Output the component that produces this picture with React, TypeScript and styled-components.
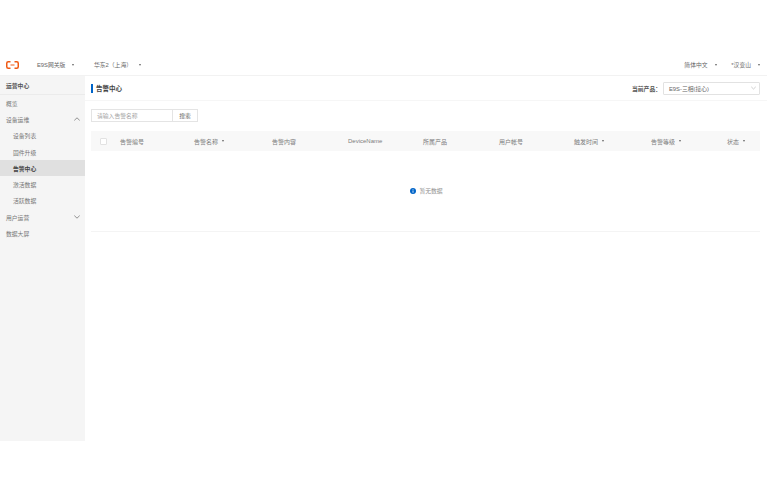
import React from "react";
import styled, { createGlobalStyle } from "styled-components";

const textColor = "#757575";
const fontStack = `"Liberation Sans", "Noto Sans CJK SC", sans-serif`;

const GlobalStyle = createGlobalStyle`
  body {
    margin: 0;
    background: #fff;
    font-family: ${fontStack};
    overflow: hidden;
  }
`;

const Page = styled.div`
  width: 767px;
  height: 495px;
  padding-top: 52px;
  box-sizing: border-box;
`;

// HEADER //
const Header = styled.header`
  display: flex;
  align-items: center;
  box-sizing: border-box;
  height: 24px;
  padding: 2px 7px 0 6px;
  border-bottom: 1px solid #f2f2f2;
  font-size: 5.8px;
  color: #666;
`;

const Logo = styled.svg`
  width: 13px;
  height: 8px;
  margin-right: 18px;
`;

const HeaderMenu = styled.div<{ $width?: number }>`
  display: flex;
  align-items: center;
  gap: 7px;
  width: ${(p) => (p.$width ? `${p.$width}px` : "auto")};
  white-space: nowrap;
`;

const Spacer = styled.div`
  flex: 1;
`;

const Caret = styled.span`
  display: inline-block;
  width: 0;
  height: 0;
  border-left: 1.5px solid transparent;
  border-right: 1.5px solid transparent;
  border-top: 2px solid #666;
`;

// BODY //
const Body = styled.div`
  display: flex;
  height: 365px;
`;

const Sidebar = styled.aside`
  width: 85px;
  background: #f5f5f5;
  flex-shrink: 0;
`;

const SideTitle = styled.div`
  display: flex;
  align-items: center;
  height: 18px;
  padding-left: 6px;
  border-bottom: 1px solid #ebebeb;
  font-size: 5.8px;
  font-weight: 700;
  color: #555;
`;

const SideItem = styled.div<{ $child?: boolean; $active?: boolean }>`
  display: flex;
  align-items: center;
  justify-content: space-between;
  height: 16.3px;
  padding: 0 5px 0 ${(p) => (p.$child ? 13 : 6)}px;
  font-size: 5.8px;
  font-weight: ${(p) => (p.$active ? 700 : 400)};
  color: ${(p) => (p.$active ? "#444" : textColor)};
  background: ${(p) => (p.$active ? "#e0e0e0" : "transparent")};
`;

const Chevron = styled.svg<{ $light?: boolean }>`
  width: ${(p) => (p.$light ? 5 : 6)}px;
  height: 4px;
  fill: none;
  stroke: ${(p) => (p.$light ? "#b5b5b5" : "#777")};
  stroke-width: 0.8;
`;

const Main = styled.main`
  flex: 1;
  min-width: 0;
`;

const TitleBar = styled.div`
  display: flex;
  align-items: center;
  justify-content: space-between;
  height: 24px;
  padding: 0 7px 0 6px;
  border-bottom: 1px solid #f6f6f6;
`;

const PageTitle = styled.h1`
  margin: 0;
  padding-left: 3px;
  border-left: 2px solid #0064c8;
  font-size: 6.5px;
  line-height: 9px;
  font-weight: 700;
  color: #444;
`;

const ProductPicker = styled.div`
  display: flex;
  align-items: center;
  font-size: 5.8px;
  font-weight: 700;
  color: #555;
`;

const Select = styled.div`
  display: flex;
  align-items: center;
  justify-content: space-between;
  box-sizing: border-box;
  width: 97px;
  height: 13px;
  margin-left: 2px;
  padding: 0 3px 0 5px;
  border: 1px solid #e2e2e2;
  border-radius: 1px;
  font-weight: 400;
  color: #666;
`;

const Content = styled.div`
  padding: 8px 7px 0 6px;
`;

const SearchRow = styled.div`
  display: flex;
  height: 13px;
  margin-bottom: 9px;
`;

const SearchInput = styled.div`
  display: flex;
  align-items: center;
  box-sizing: border-box;
  width: 82px;
  padding-left: 5px;
  border: 1px solid #e4e4e4;
  font-size: 5.8px;
  color: #a5a5a5;
`;

const SearchButton = styled.div`
  display: flex;
  align-items: center;
  justify-content: center;
  box-sizing: border-box;
  width: 25px;
  border: 1px solid #e4e4e4;
  border-left: none;
  font-size: 5.8px;
  color: #666;
`;

const TableHead = styled.div`
  display: grid;
  grid-template-columns: 29px 74px 78px 76px 75px 76px 75px 77px 76px 1fr;
  align-items: center;
  height: 20px;
  background: #f8f8f8;
  font-size: 6px;
  color: #7d7d7d;
`;

const CheckCell = styled.div`
  display: flex;
  padding-left: 9px;
`;

const Checkbox = styled.span`
  box-sizing: border-box;
  width: 7px;
  height: 7px;
  border: 1px solid #e2e2e2;
  border-radius: 1px;
  background: #fff;
`;

const HeadCell = styled.div`
  display: flex;
  align-items: center;
  gap: 4px;
  white-space: nowrap;
`;

const EmptyState = styled.div`
  display: flex;
  align-items: center;
  justify-content: center;
  gap: 3px;
  box-sizing: border-box;
  height: 81px;
  padding: 0 0 1px 2px;
  border-bottom: 1px solid #f4f4f4;
  font-size: 5.8px;
  color: #909090;
`;

const InfoIcon = styled.svg`
  width: 6px;
  height: 6px;
`;

const columns = [
  { label: "告警编号" },
  { label: "告警名称", sort: true },
  { label: "告警内容" },
  { label: "DeviceName" },
  { label: "所属产品" },
  { label: "用户帐号" },
  { label: "触发时间", sort: true },
  { label: "告警等级", sort: true },
  { label: "状态", sort: true },
];

const App: React.FunctionComponent = () => {
  return (
    <Page>
      <GlobalStyle />
      <Header>
        <Logo viewBox="0 0 26 16">
          <path
            d="M9 1.5H4.5Q1.5 1.5 1.5 4.5v7q0 3 3 3H9M17 1.5h4.5q3 0 3 3v7q0 3-3 3H17"
            fill="none"
            stroke="#f05a14"
            strokeWidth="3"
          />
          <rect x="9" y="7" width="8" height="2" fill="#f05a14" />
        </Logo>
        <HeaderMenu $width={57}>
          E9S网关版 <Caret />
        </HeaderMenu>
        <HeaderMenu>
          华东2（上海） <Caret />
        </HeaderMenu>
        <Spacer />
        <HeaderMenu $width={47}>
          简体中文 <Caret />
        </HeaderMenu>
        <HeaderMenu>
          *汉变山 <Caret />
        </HeaderMenu>
      </Header>
      <Body>
        <Sidebar>
          <SideTitle>运营中心</SideTitle>
          <nav>
            <SideItem>概览</SideItem>
            <SideItem>
              设备运维
              <Chevron viewBox="0 0 6 4">
                <path d="M0.3 3.4 3 0.8 5.7 3.4" />
              </Chevron>
            </SideItem>
            <SideItem $child>设备列表</SideItem>
            <SideItem $child>固件升级</SideItem>
            <SideItem $child $active>
              告警中心
            </SideItem>
            <SideItem $child>激活数据</SideItem>
            <SideItem $child>活跃数据</SideItem>
            <SideItem>
              用户运营
              <Chevron viewBox="0 0 6 4">
                <path d="M0.3 0.6 3 3.2 5.7 0.6" />
              </Chevron>
            </SideItem>
            <SideItem>数据大屏</SideItem>
          </nav>
        </Sidebar>
        <Main>
          <TitleBar>
            <PageTitle>告警中心</PageTitle>
            <ProductPicker>
              当前产品：
              <Select>
                E9S-三相(接心)
                <Chevron $light viewBox="0 0 6 4">
                  <path d="M0.3 0.6 3 3.2 5.7 0.6" />
                </Chevron>
              </Select>
            </ProductPicker>
          </TitleBar>
          <Content>
            <SearchRow>
              <SearchInput>请输入告警名称</SearchInput>
              <SearchButton>搜索</SearchButton>
            </SearchRow>
            <TableHead>
              <CheckCell>
                <Checkbox />
              </CheckCell>
              {columns.map((col) => (
                <HeadCell key={col.label}>
                  {col.label}
                  {col.sort && <Caret />}
                </HeadCell>
              ))}
            </TableHead>
            <EmptyState>
              <InfoIcon viewBox="0 0 12 12">
                <circle cx="6" cy="6" r="6" fill="#0064c8" />
                <rect x="5.2" y="5" width="1.6" height="4.5" fill="#fff" />
                <rect x="5.2" y="2.6" width="1.6" height="1.6" fill="#fff" />
              </InfoIcon>
              暂无数据
            </EmptyState>
          </Content>
        </Main>
      </Body>
    </Page>
  );
};

export default App;
